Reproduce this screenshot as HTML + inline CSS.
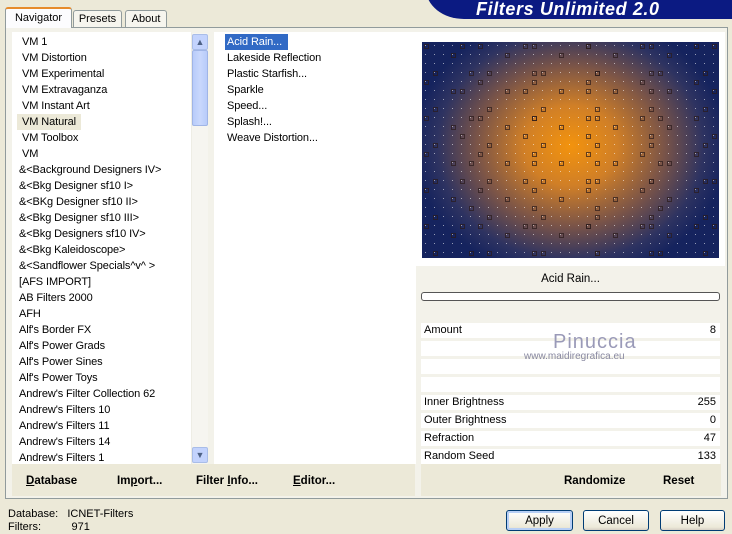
<!DOCTYPE html>
<html><head><meta charset="utf-8"><style>
*{margin:0;padding:0;box-sizing:border-box}
body{width:732px;height:530px;overflow:hidden;background:#ece9d8;font-family:"Liberation Sans",sans-serif;font-size:11px;color:#000;position:relative}
.a{position:absolute}
.banner{left:426px;top:-20px;width:330px;height:39px;background:#0b1a82;border-bottom-left-radius:38px 30px}
.btitle{left:476px;top:-1px;font-size:18px;font-weight:bold;font-style:italic;color:#fff;letter-spacing:0.6px;line-height:20px}
.tab{border:1px solid #919b9c;border-bottom:none;background:#f6f5ee;border-radius:3px 3px 0 0;text-align:center;font-size:11px}
.panel{left:5px;top:27px;width:723px;height:472px;border:1px solid #919b9c;background:#f3f2ea}
.list{background:#fff}
.row{position:absolute;height:16px;line-height:16px;font-size:11px;letter-spacing:-0.1px;white-space:nowrap}
.p{position:absolute;left:421px;width:299px;height:15px;background:#fff;line-height:15px;font-size:11px}
.p span{position:absolute;right:4px}
.p b{font-weight:normal;position:absolute;left:3px}
.btn{border:1px solid #003c74;border-radius:3px;background:linear-gradient(#fff,#ece9d8 85%,#d6d0c5);text-align:center;line-height:20px;font-size:11.5px;height:21px}
.bb{font-weight:bold;font-size:11.5px}
</style></head><body>
<div class="a banner"></div>
<div class="a btitle">Filters Unlimited 2.0</div>
<div class="a panel"></div>
<div class="a tab" style="left:5px;top:7px;width:67px;height:21px;background:#fcfcfe;border-top:2px solid #e68b2c;line-height:18px;z-index:2">Navigator</div>
<div class="a tab" style="left:73px;top:10px;width:49px;height:17px;line-height:16px">Presets</div>
<div class="a tab" style="left:125px;top:10px;width:42px;height:17px;line-height:16px">About</div>

<div class="a list" style="left:12px;top:32px;width:179px;height:432px"></div>
<div class="a" style="left:191px;top:33px;width:17px;height:431px;background:#f6f5f0;border-left:1px solid #eeede5"></div>
<div class="a" style="left:192px;top:34px;width:16px;height:16px;background:#c3d3fd;border:1px solid #a9bde8;border-radius:2px;text-align:center;font-size:9px;line-height:14px;color:#4d6185">&#9650;</div>
<div class="a" style="left:192px;top:50px;width:16px;height:76px;background:linear-gradient(90deg,#b8cbfa,#c9d8fc,#b8cbfa);border:1px solid #a0b5e6;border-radius:2px"></div>
<div class="a" style="left:192px;top:447px;width:16px;height:16px;background:#c3d3fd;border:1px solid #a9bde8;border-radius:2px;text-align:center;font-size:9px;line-height:14px;color:#4d6185">&#9660;</div>
<div class="a list" style="left:214px;top:32px;width:202px;height:432px"></div>

<div class="row" style="left:17px;top:114px;width:64px;background:#ece9d8"></div>
<div class="row" style="left:22px;top:34px">VM 1</div>
<div class="row" style="left:22px;top:50px">VM Distortion</div>
<div class="row" style="left:22px;top:66px">VM Experimental</div>
<div class="row" style="left:22px;top:82px">VM Extravaganza</div>
<div class="row" style="left:22px;top:98px">VM Instant Art</div>
<div class="row" style="left:22px;top:114px">VM Natural</div>
<div class="row" style="left:22px;top:130px">VM Toolbox</div>
<div class="row" style="left:22px;top:146px">VM</div>
<div class="row" style="left:19px;top:162px">&amp;&lt;Background Designers IV&gt;</div>
<div class="row" style="left:19px;top:178px">&amp;&lt;Bkg Designer sf10 I&gt;</div>
<div class="row" style="left:19px;top:194px">&amp;&lt;BKg Designer sf10 II&gt;</div>
<div class="row" style="left:19px;top:210px">&amp;&lt;Bkg Designer sf10 III&gt;</div>
<div class="row" style="left:19px;top:226px">&amp;&lt;Bkg Designers sf10 IV&gt;</div>
<div class="row" style="left:19px;top:242px">&amp;&lt;Bkg Kaleidoscope&gt;</div>
<div class="row" style="left:19px;top:258px">&amp;&lt;Sandflower Specials^v^ &gt;</div>
<div class="row" style="left:19px;top:274px">[AFS IMPORT]</div>
<div class="row" style="left:19px;top:290px">AB Filters 2000</div>
<div class="row" style="left:19px;top:306px">AFH</div>
<div class="row" style="left:19px;top:322px">Alf's Border FX</div>
<div class="row" style="left:19px;top:338px">Alf's Power Grads</div>
<div class="row" style="left:19px;top:354px">Alf's Power Sines</div>
<div class="row" style="left:19px;top:370px">Alf's Power Toys</div>
<div class="row" style="left:19px;top:386px">Andrew's Filter Collection 62</div>
<div class="row" style="left:19px;top:402px">Andrew's Filters 10</div>
<div class="row" style="left:19px;top:418px">Andrew's Filters 11</div>
<div class="row" style="left:19px;top:434px">Andrew's Filters 14</div>
<div class="row" style="left:19px;top:450px">Andrew's Filters 1</div>

<div class="row" style="left:225px;top:34px;width:63px;background:#316ac5"></div>
<div class="row" style="left:227px;top:34px;color:#fff">Acid Rain...</div>
<div class="row" style="left:227px;top:50px">Lakeside Reflection</div>
<div class="row" style="left:227px;top:66px">Plastic Starfish...</div>
<div class="row" style="left:227px;top:82px">Sparkle</div>
<div class="row" style="left:227px;top:98px">Speed...</div>
<div class="row" style="left:227px;top:114px">Splash!...</div>
<div class="row" style="left:227px;top:130px">Weave Distortion...</div>

<div class="a" style="left:416px;top:32px;width:309px;height:234px;background:#fff"></div>
<svg class="a" style="left:422px;top:42px" width="297" height="216">
<defs>
<radialGradient id="g" cx="0.5" cy="0.48" r="0.62" gradientTransform="translate(0.5 0.48) scale(0.85 1) translate(-0.5 -0.48)">
<stop offset="0" stop-color="#f3930d"/><stop offset="0.3" stop-color="#d07f27"/><stop offset="0.6" stop-color="#7a5448"/><stop offset="0.85" stop-color="#2e3361"/><stop offset="1" stop-color="#15235e"/></radialGradient>
<pattern id="d" width="9" height="9" patternUnits="userSpaceOnUse"><rect x="3" y="3" width="1" height="1" fill="#fff" opacity="0.55"/></pattern>
<pattern id="s" width="54" height="36" patternUnits="userSpaceOnUse"><rect x="2.5" y="2.5" width="4" height="4" fill="none" stroke="#2a1a1a" stroke-width="1"/><rect x="29.5" y="11.5" width="4" height="4" fill="none" stroke="#2a1a1a"/><rect x="11.5" y="29.5" width="4" height="4" fill="none" stroke="#2a1a1a"/></pattern>
<pattern id="s2" width="63" height="45" patternUnits="userSpaceOnUse"><rect x="38.5" y="2.5" width="4" height="4" fill="none" stroke="#2a1a1a"/><rect x="47.5" y="29.5" width="4" height="4" fill="none" stroke="#2a1a1a"/></pattern>
</defs>
<rect width="297" height="216" fill="url(#g)"/>
<rect width="297" height="216" fill="url(#d)"/>
<rect width="297" height="216" fill="url(#s)" opacity="0.7"/>
<rect width="297" height="216" fill="url(#s2)" opacity="0.7"/>
</svg>
<div class="a" style="left:421px;top:267px;width:299px;height:24px;text-align:center;line-height:24px;font-size:11.5px">Acid Rain...</div>
<div class="a" style="left:421px;top:292px;width:299px;height:9px;background:#fff;border:1px solid #555;border-radius:3px"></div>
<div class="p" style="top:323px"><b>Amount</b><span>8</span></div>
<div class="p" style="top:341px"></div>
<div class="p" style="top:359px"></div>
<div class="p" style="top:377px"></div>
<div class="p" style="top:395px"><b>Inner Brightness</b><span>255</span></div>
<div class="p" style="top:413px"><b>Outer Brightness</b><span>0</span></div>
<div class="p" style="top:431px"><b>Refraction</b><span>47</span></div>
<div class="p" style="top:449px"><b>Random Seed</b><span>133</span></div>
<div class="a" style="left:553px;top:331px;font-size:20px;color:#9a9ab8;letter-spacing:1px">Pinuccia</div>
<div class="a" style="left:524px;top:351px;font-size:10px;color:#8888a0">www.maidiregrafica.eu</div>

<div class="a" style="left:12px;top:464px;width:403px;height:32px;background:#ece9d8"></div>
<div class="a" style="left:421px;top:464px;width:300px;height:32px;background:#ece9d8"></div>
<div class="a bb" style="left:26px;top:475px"><u>D</u>atabase</div>
<div class="a bb" style="left:117px;top:475px">Im<u>p</u>ort...</div>
<div class="a bb" style="left:196px;top:475px">Filter <u>I</u>nfo...</div>
<div class="a bb" style="left:293px;top:475px"><u>E</u>ditor...</div>
<div class="a bb" style="left:564px;top:475px">Randomize</div>
<div class="a bb" style="left:663px;top:475px">Reset</div>

<div class="a" style="left:8px;top:508px;line-height:13px;font-size:11px">Database:&nbsp;&nbsp; ICNET-Filters<br>Filters:&nbsp;&nbsp;&nbsp;&nbsp;&nbsp;&nbsp;&nbsp;&nbsp;&nbsp; 971</div>
<div class="a btn" style="left:506px;top:510px;width:67px;box-shadow:inset 0 0 0 2px #b8cff5">Apply</div>
<div class="a btn" style="left:583px;top:510px;width:66px">Cancel</div>
<div class="a btn" style="left:660px;top:510px;width:65px">Help</div>
</body></html>
